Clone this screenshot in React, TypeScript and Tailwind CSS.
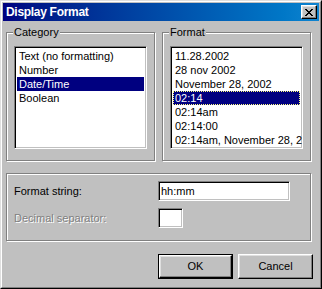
import React from "react";

const sunken =
  "border border-t-[#808080] border-l-[#808080] border-r-white border-b-white shadow-[inset_1px_1px_0_#000,inset_-1px_-1px_0_#c0c0c0] bg-white";

const raised =
  "border border-t-white border-l-white border-r-black border-b-black shadow-[inset_-1px_-1px_0_#808080,inset_1px_1px_0_#dfdfdf] bg-[#c0c0c0]";

function GroupBox({
  label,
  className,
  children,
}: {
  label?: string;
  className?: string;
  children: React.ReactNode;
}) {
  return (
    <div
      className={`relative border border-[#808080] shadow-[inset_1px_1px_0_#fff,1px_1px_0_#fff] ${className ?? ""}`}
    >
      {label && (
        <span className="absolute -top-[8px] left-[6px] bg-[#c0c0c0] px-[1px] leading-[14px]">
          {label}
        </span>
      )}
      {children}
    </div>
  );
}

function ListBox({
  items,
  selected,
  focused,
}: {
  items: string[];
  selected: number;
  focused?: boolean;
}) {
  return (
    <div className={`ml-[7px] mt-[13px] w-[133px] h-[103px] p-[2px] overflow-hidden ${sunken}`}>
      {items.map((item, i) => (
        <div
          key={item}
          className={`h-[14px] leading-[14px] pl-[2px] whitespace-nowrap ${
            i === selected ? "bg-[#000080] text-white" : "text-black"
          } ${
            i === selected && focused
              ? "outline outline-1 outline-dotted outline-[#ffff7f] -outline-offset-1"
              : ""
          }`}
        >
          {item}
        </div>
      ))}
    </div>
  );
}

export default function App() {
  return (
    <div
      className="w-[322px] h-[289px] bg-[#c0c0c0] text-[11px] text-black border border-t-[#dfdfdf] border-l-[#dfdfdf] border-r-black border-b-black"
      style={{ fontFamily: '"Liberation Sans", Arial, sans-serif' }}
    >
      <div className="h-full border border-t-white border-l-white border-r-[#808080] border-b-[#808080] p-[1px]">
        {/* title bar */}
        <div className="h-[18px] flex items-center justify-between bg-gradient-to-r from-[#000080] to-[#1084d0]">
          <span className="pl-[3px] text-white font-bold text-[12px] tracking-[-0.3px]">
            Display Format
          </span>
          <button className={`mr-[2px] w-[16px] h-[14px] flex items-center justify-center ${raised}`}>
            <svg width="8" height="7" viewBox="0 0 8 7" shapeRendering="crispEdges">
              <path
                d="M0 0h2v1h-2zM6 0h2v1h-2zM1 1h2v1h-2zM5 1h2v1h-2zM2 2h4v1h-4zM3 3h2v1h-2zM2 4h4v1h-4zM1 5h2v1h-2zM5 5h2v1h-2zM0 6h2v1h-2zM6 6h2v1h-2z"
                fill="#000"
              />
            </svg>
          </button>
        </div>

        <div className="pl-[3px] pt-[11px]">
          <div className="flex gap-[7px]">
            <GroupBox label="Category" className="w-[149px] h-[129px]">
              <ListBox
                items={["Text (no formatting)", "Number", "Date/Time", "Boolean"]}
                selected={2}
              />
            </GroupBox>
            <GroupBox label="Format" className="w-[149px] h-[129px]">
              <ListBox
                items={[
                  "11.28.2002",
                  "28 nov 2002",
                  "November 28, 2002",
                  "02:14",
                  "02:14am",
                  "02:14:00",
                  "02:14am, November 28, 2002",
                ]}
                selected={3}
                focused
              />
            </GroupBox>
          </div>

          <GroupBox className="mt-[12px] w-[305px] h-[68px] pt-[7px]">
            <div className="flex items-center h-[20px]">
              <span className="w-[151px] pl-[7px]">Format string:</span>
              <div className={`w-[132px] h-[20px] pl-[2px] leading-[18px] ${sunken}`}>hh:mm</div>
            </div>
            <div className="flex items-center h-[20px] mt-[7px]">
              <span className="w-[151px] pl-[7px] text-[#808080] [text-shadow:1px_1px_0_#fff]">
                Decimal separator:
              </span>
              <div className={`w-[25px] h-[20px] ${sunken}`} />
            </div>
          </GroupBox>

          <div className="flex gap-[5px] pl-[152px] mt-[13px]">
            <div className="border border-black">
              <button className={`w-[73px] h-[23px] ${raised}`}>OK</button>
            </div>
            <button className={`w-[75px] h-[25px] ${raised}`}>Cancel</button>
          </div>
        </div>
      </div>
    </div>
  );
}
